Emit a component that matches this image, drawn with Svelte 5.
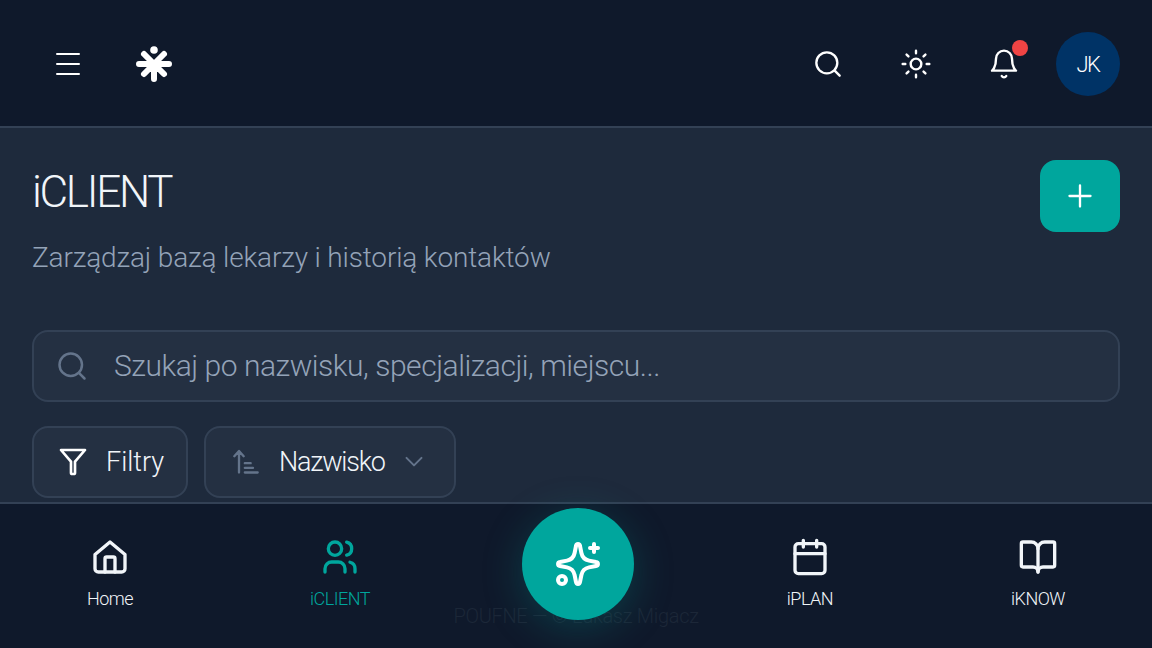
<script>
	const navLeft = [
		{ label: 'Home', icon: 'home' },
		{ label: 'iCLIENT', icon: 'users', active: true }
	];
	const navRight = [
		{ label: 'iPLAN', icon: 'calendar' },
		{ label: 'iKNOW', icon: 'book' }
	];
</script>

{#snippet navIcon(name)}
	<svg class="nav-icon" viewBox="0 0 24 24" fill="none" stroke="currentColor" stroke-width="2" stroke-linecap="round" stroke-linejoin="round">
		{#if name === 'home'}
			<path d="M3 10.500 12 3l9 7.500V19a2 2 0 0 1-2 2H5a2 2 0 0 1-2-2z" />
			<path d="M9 21v-8a1 1 0 0 1 1-1h4a1 1 0 0 1 1 1v8" />
		{:else if name === 'users'}
			<circle cx="9" cy="7" r="4" />
			<path d="M3 21v-2a4 4 0 0 1 4-4h4a4 4 0 0 1 4 4v2" />
			<path d="M16 3.130a4 4 0 0 1 0 7.750" />
			<path d="M21 21v-2a4 4 0 0 0-3-3.850" />
		{:else if name === 'calendar'}
			<rect x="3" y="4" width="18" height="18" rx="2" />
			<path d="M8 2v4M16 2v4M3 10h18" />
		{:else}
			<path d="M12 7v14" />
			<path d="M3 18a1 1 0 0 1-1-1V4a1 1 0 0 1 1-1h5a4 4 0 0 1 4 4 4 4 0 0 1 4-4h5a1 1 0 0 1 1 1v13a1 1 0 0 1-1 1h-6a3 3 0 0 0-3 3 3 3 0 0 0-3-3z" />
		{/if}
	</svg>
{/snippet}

{#snippet navItem(item)}
	<button class="nav-item" class:active={item.active}>
		{@render navIcon(item.icon)}
		<span>{item.label}</span>
	</button>
{/snippet}

<div class="page">
	<header class="topbar">
		<div class="top-left">
			<svg class="menu" viewBox="0 0 24 24" fill="none" stroke="currentColor" stroke-width="2" stroke-linecap="round">
				<path d="M1 2h22M1 12h22M1 22h22" />
			</svg>
			<svg class="logo" viewBox="0 0 36 36" fill="none" stroke="currentColor" stroke-width="6" stroke-linecap="round">
				<circle cx="18" cy="4" r="3.800" fill="currentColor" stroke="none" />
				<path d="M18 18v15M18 18H3M18 18h15M18 18 8 8M18 18 28 8M18 18 8 28M18 18l10 10" />
			</svg>
		</div>
		<div class="top-right">
			<div class="top-btn">
				<svg class="search-icon" viewBox="0 0 24 24" fill="none" stroke="currentColor" stroke-width="2" stroke-linecap="round" stroke-linejoin="round">
					<circle cx="11" cy="11" r="9" />
					<path d="m22 22-4.300-4.300" />
				</svg>
			</div>
			<div class="top-btn">
				<svg viewBox="0 0 24 24" fill="none" stroke="currentColor" stroke-width="1.800" stroke-linecap="round" stroke-linejoin="round">
					<circle cx="12" cy="12" r="4" />
					<path d="M12 2v2M12 20v2M4.930 4.930l1.410 1.410M17.660 17.660l1.410 1.410M2 12h2M20 12h2M6.340 17.660l-1.410 1.410M19.070 4.930l-1.410 1.410" />
				</svg>
			</div>
			<div class="top-btn">
				<svg viewBox="0 0 24 24" fill="none" stroke="currentColor" stroke-width="1.800" stroke-linecap="round" stroke-linejoin="round">
					<path d="M10.300 21a1.940 1.940 0 0 0 3.400 0" />
					<path d="M6 8a6 6 0 0 1 12 0c0 7 3 9 3 9H3s3-2 3-9" />
				</svg>
				<span class="dot"></span>
			</div>
			<div class="avatar">JK</div>
		</div>
	</header>

	<main class="content">
		<div class="title-row">
			<div>
				<h1>iCLIENT</h1>
				<p>Zarządzaj bazą lekarzy i historią kontaktów</p>
			</div>
			<button class="add" aria-label="Dodaj">
				<svg viewBox="0 0 24 24" fill="none" stroke="currentColor" stroke-width="2" stroke-linecap="round">
					<path d="M12 3v18M3 12h18" />
				</svg>
			</button>
		</div>

		<div class="search">
			<svg viewBox="0 0 24 24" fill="none" stroke="currentColor" stroke-width="2" stroke-linecap="round" stroke-linejoin="round">
				<circle cx="11" cy="11" r="9" />
				<path d="m22 22-4.300-4.300" />
			</svg>
			<span>Szukaj po nazwisku, specjalizacji, miejscu...</span>
		</div>

		<div class="filters">
			<button class="chip filter">
				<svg viewBox="0 0 24 24" fill="none" stroke="currentColor" stroke-width="2" stroke-linecap="round" stroke-linejoin="round">
					<path d="M3 3h18l-7.500 8.800V20a1 1 0 0 1-1 1h-1a1 1 0 0 1-1-1v-8.200z" />
				</svg>
				<span>Filtry</span>
			</button>
			<button class="chip sort">
				<svg class="sort-icon" viewBox="0 0 24 24" fill="none" stroke="currentColor" stroke-width="2" stroke-linecap="round" stroke-linejoin="round">
					<path d="M2 7l4-4.500L10 7M6 3v18M11 13h5M11 17h7M11 21h11" />
				</svg>
				<span>Nazwisko</span>
				<svg class="chev" viewBox="0 0 24 24" fill="none" stroke="currentColor" stroke-width="2.400" stroke-linecap="round" stroke-linejoin="round">
					<path d="m3 7 9 9 9-9" />
				</svg>
			</button>
		</div>
	</main>

	<nav class="bottom">
		<div class="legal">POUFNE — © Łukasz Migacz</div>
		<div class="nav-slot">{@render navItem(navLeft[0])}</div>
		<div class="nav-slot">{@render navItem(navLeft[1])}</div>
		<div class="nav-slot">
			<button class="fab" aria-label="AI">
				<svg viewBox="0 0 24 24" fill="none" stroke="currentColor" stroke-width="2" stroke-linecap="round" stroke-linejoin="round">
					<path d="M11 3c.2-1.300 1.800-1.300 2 0l.7 3.500c.4 1.900 1.900 3.400 3.800 3.800l3.500.7c1.300.2 1.300 1.800 0 2l-3.500.7c-1.900.4-3.400 1.900-3.800 3.800l-.7 3.500c-.2 1.300-1.800 1.300-2 0l-.7-3.500c-.4-1.900-1.900-3.400-3.800-3.800l-3.500-.7c-1.300-.2-1.300-1.800 0-2l3.500-.7c1.900-.4 3.400-1.900 3.800-3.800z" />
					<path d="M20 2v4M18 4h4" />
					<circle cx="4" cy="20" r="2" />
				</svg>
			</button>
		</div>
		<div class="nav-slot">{@render navItem(navRight[0])}</div>
		<div class="nav-slot">{@render navItem(navRight[1])}</div>
	</nav>
</div>

<style>
	:global(body) {
		margin: 0;
		background: #1e293b;
	}

	.page {
		width: 1152px;
		height: 648px;
		display: flex;
		flex-direction: column;
		overflow: hidden;
		font-family: Roboto, "Noto Sans", sans-serif;
		font-weight: 300;
	}

	button {
		font: inherit;
		border: none;
		background: none;
		padding: 0;
		color: inherit;
	}

	.topbar {
		height: 124px;
		flex: none;
		display: flex;
		align-items: center;
		justify-content: space-between;
		padding: 2px 32px 0 56px;
		background: #0f192b;
		border-bottom: 2px solid #334155;
		color: #fff;
	}

	.top-left {
		display: flex;
		align-items: center;
		gap: 56px;
	}

	.menu {
		width: 24px;
		height: 24px;
		display: block;
	}

	.logo {
		width: 36px;
		height: 36px;
		display: block;
	}

	.top-right {
		display: flex;
		align-items: center;
		gap: 48px;
	}

	.top-btn {
		position: relative;
		width: 40px;
		height: 40px;
		display: flex;
		align-items: center;
		justify-content: center;
	}

	.top-btn svg {
		width: 32px;
		height: 32px;
		display: block;
	}

	.top-btn .search-icon {
		width: 28px;
		height: 28px;
	}

	.dot {
		position: absolute;
		top: -4px;
		right: -4px;
		width: 16px;
		height: 16px;
		border-radius: 50%;
		background: #ef4444;
	}

	.avatar {
		width: 64px;
		height: 64px;
		margin-left: -16px;
		border-radius: 50%;
		background: #003366;
		display: flex;
		align-items: center;
		justify-content: center;
		font-size: 22px;
		letter-spacing: -1.500px;
	}

	.content {
		flex: 1;
		min-height: 0;
		padding: 32px 32px 0;
		background: #1e2a3c;
		color: #fff;
	}

	.title-row {
		display: flex;
		justify-content: space-between;
		align-items: flex-start;
		height: 170px;
	}

	h1 {
		margin: 2px 0 0;
		font-size: 44px;
		line-height: 60px;
		font-weight: 300;
		letter-spacing: -2.300px;
		color: #f1f5f9;
	}

	p {
		margin: 16px 0 0;
		font-size: 28px;
		line-height: 40px;
		letter-spacing: -0.150px;
		color: #94a3b8;
	}

	.add {
		width: 80px;
		height: 72px;
		border-radius: 16px;
		background: #00a69d;
		display: flex;
		align-items: center;
		justify-content: center;
		color: #fff;
	}

	.add svg {
		width: 28px;
		height: 28px;
	}

	.search {
		height: 68px;
		border: 2px solid #334155;
		border-radius: 16px;
		background: #243042;
		display: flex;
		align-items: center;
		padding-left: 23px;
		gap: 27px;
		font-size: 30px;
		line-height: 64px;
		letter-spacing: -0.470px;
		color: #94a3b8;
	}

	.search svg {
		width: 30px;
		height: 30px;
		color: #64748b;
	}

	.filters {
		display: flex;
		gap: 16px;
		margin-top: 24px;
	}

	.chip {
		height: 72px;
		box-sizing: border-box;
		border: 2px solid #334155;
		border-radius: 16px;
		background: #243042;
		display: flex;
		align-items: center;
		font-size: 27px;
		color: #f1f5f9;
	}

	.filter {
		width: 156px;
		padding-left: 23px;
		gap: 17px;
	}

	.filter svg {
		width: 32px;
		height: 32px;
		color: #fff;
	}

	.sort {
		width: 252px;
		padding-left: 26px;
		letter-spacing: -1.200px;
	}

	.sort-icon {
		width: 28px;
		height: 28px;
		color: #64748b;
		margin-right: 19px;
	}

	.chev {
		width: 20px;
		height: 20px;
		color: #64748b;
		margin-left: auto;
		margin-right: 30px;
	}

	.bottom {
		position: relative;
		height: 144px;
		flex: none;
		display: grid;
		grid-template-columns: 220px 240px 236px 228px 228px;
		background: #0f192b;
		border-top: 2px solid #334155;
		color: #fff;
	}

	.legal {
		position: absolute;
		left: 0;
		right: 0;
		top: 100px;
		text-align: center;
		font-size: 20px;
		letter-spacing: -0.300px;
		color: #1c2738;
	}

	.nav-slot {
		position: relative;
		display: flex;
		justify-content: center;
	}

	.nav-item {
		display: flex;
		flex-direction: column;
		align-items: center;
		padding-top: 33px;
		color: #f1f5f9;
		font-size: 18px;
		letter-spacing: -0.500px;
	}

	.nav-item.active {
		color: #00a69d;
	}

	.nav-item span {
		margin-top: 8px;
		line-height: 28px;
	}

	.nav-icon {
		width: 40px;
		height: 40px;
		display: block;
	}

	.fab {
		position: absolute;
		top: 4px;
		left: 62px;
		width: 112px;
		height: 112px;
		border-radius: 50%;
		background: #00a69d;
		box-shadow: 0 8px 40px rgba(0, 166, 157, 0.25);
		display: flex;
		align-items: center;
		justify-content: center;
		color: #fff;
	}

	.fab svg {
		width: 48px;
		height: 48px;
	}
</style>
